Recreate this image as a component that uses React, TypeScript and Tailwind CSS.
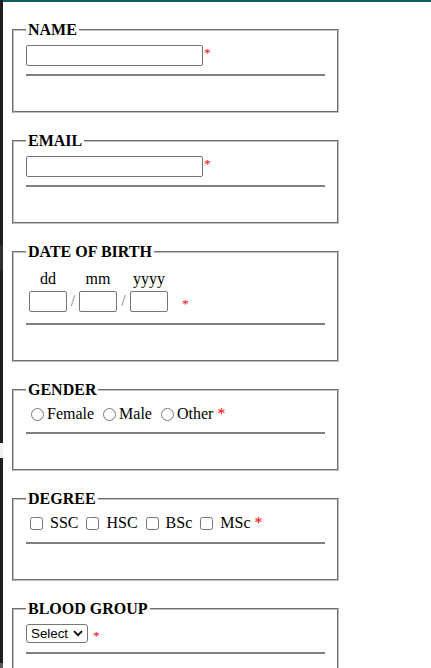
import React from "react";

const Req = () => (
  <span className="ml-[1px] mt-[1px] text-[13.33px] leading-none text-[#ff0000]">*</span>
);

const Field = ({ title, children }: { title: string; children: React.ReactNode }) => (
  <fieldset className="w-[327px] border-2 border-[#c0c0c0] [border-style:groove] px-3 pt-[6px] pb-[10px]">
    <legend className="px-[2px] font-bold">{title}</legend>
    {children}
    <div className="mt-2 h-[2px] bg-[#808080]" />
    <div className="h-[25px]" />
  </fieldset>
);

const TextBox = ({ w }: { w: string }) => (
  <input type="text" className={`${w} h-[21px] rounded-[2px] border border-[#767676] bg-white px-[2px] font-['Liberation_Sans'] text-[13.33px]`} />
);

// left strip segments (edge of neighbouring window)
const strip = [
  { h: "h-[245px]", c: "bg-[#1f1f1f]" },
  { h: "h-[25px]", c: "bg-[#2e2e2e]" },
  { h: "h-[173px]", c: "bg-[#1f1f1f]" },
  { h: "h-[15px]", c: "bg-[#efefef]" },
  { h: "h-[205px]", c: "bg-[#1f1f1f]" },
  { h: "h-[40px]", c: "bg-[#5a5a5a]" },
];

const genders = ["Female", "Male", "Other"];
const degrees = ["SSC", "HSC", "BSc", "MSc"];

export default function App() {
  return (
    <div className="flex min-h-screen bg-white font-['Liberation_Serif',serif] text-base leading-[normal] text-black">
      <div className="flex w-[3px] shrink-0 flex-col">
        {strip.map((s, i) => (
          <div key={i} className={`${s.h} ${s.c}`} />
        ))}
      </div>

      <div className="flex-1">
        <div className="h-[2px] bg-[#105b62]" />

        <form className="flex flex-col gap-[19px] pl-[9px] pt-[19px]">
          <Field title="NAME">
            <div className="flex items-start">
              <TextBox w="w-[177px]" />
              <Req />
            </div>
          </Field>

          <Field title="EMAIL">
            <div className="flex items-start">
              <TextBox w="w-[177px]" />
              <Req />
            </div>
          </Field>

          <Field title="DATE OF BIRTH">
            <div className="pb-[3px] pt-[3px]">
              <div className="flex pl-[3px]">
                <span className="w-[38px] text-center">dd</span>
                <span className="w-[12px]" />
                <span className="w-[38px] text-center">mm</span>
                <span className="w-[13px]" />
                <span className="w-[38px] text-center">yyyy</span>
              </div>
              <div className="mt-[3px] flex items-start pl-[3px]">
                <TextBox w="w-[38px]" />
                <span className="mt-[1px] w-[12px] text-center text-[#808080]">/</span>
                <TextBox w="w-[38px]" />
                <span className="mt-[1px] w-[13px] text-center text-[#808080]">/</span>
                <TextBox w="w-[38px]" />
                <span className="ml-[13px] mt-[3px]">
                  <Req />
                </span>
              </div>
            </div>
          </Field>

          <Field title="GENDER">
            <div className="flex h-[19px] items-start">
              {genders.map((g, i) => (
                <label key={g} className={`flex items-start ${i > 0 ? "ml-[4px]" : ""}`}>
                  <input type="radio" name="gender" className="ml-[5px] mr-[3px] mt-[3px]" />
                  <span>{g}</span>
                </label>
              ))}
              <span className="ml-[4px] text-[#ff0000]">*</span>
            </div>
          </Field>

          <Field title="DEGREE">
            <div className="flex h-[20px] items-start">
              {degrees.map((d, i) => (
                <label key={d} className={`flex items-start ${i > 0 ? "ml-[4px]" : ""}`}>
                  <input type="checkbox" className="ml-[4px] mr-[7px] mt-[3px]" />
                  <span>{d}</span>
                </label>
              ))}
              <span className="ml-[4px] text-[#ff0000]">*</span>
            </div>
          </Field>

          <Field title="BLOOD GROUP">
            <div className="flex items-start">
              <div className="flex h-[19px] w-[62px] items-center justify-between rounded-[3px] border border-[#767676] pl-[4px] pr-[4px] font-['Liberation_Sans',sans-serif] text-[13.33px]">
                <span>Select</span>
                <svg width="10" height="7" viewBox="0 0 10 7" fill="none" stroke="#000" strokeWidth="1.8">
                  <path d="M1 1.2l4 4 4-4" />
                </svg>
              </div>
              <span className="ml-[4px] mt-[2px]">
                <Req />
              </span>
            </div>
          </Field>
        </form>
      </div>
    </div>
  );
}
